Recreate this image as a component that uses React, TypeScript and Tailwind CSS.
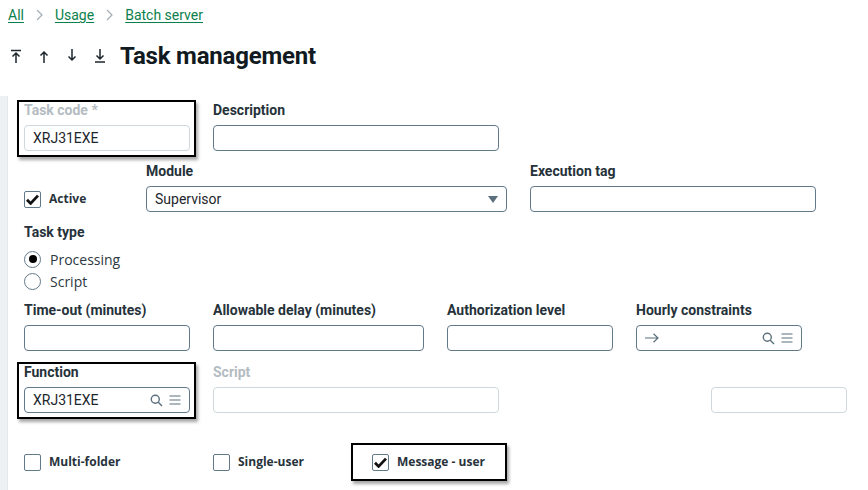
import { ReactNode } from 'react';

const labelCls = 'block h-[18px] text-[14px] leading-[18px] font-bold text-[#26323a]';

function SearchIcon() {
  return (
    <svg width="13" height="13" viewBox="0 0 13 13" fill="none" stroke="#5b6f7c" strokeWidth="1.4">
      <circle cx="5.3" cy="5.3" r="4" />
      <path d="M8.3 8.3 12 12" />
    </svg>
  );
}

function MenuIcon() {
  return (
    <svg width="12" height="10" viewBox="0 0 12 10" fill="none" stroke="#5b6f7c" strokeWidth="1.2">
      <path d="M0.5 1h11M0.5 5h11M0.5 9h11" />
    </svg>
  );
}

function CheckMark() {
  return (
    <svg width="13" height="11" viewBox="0 0 13 11">
      <path d="M1 5.8 4.6 9.4 12 1.6" fill="none" stroke="#111" strokeWidth="2.8" />
    </svg>
  );
}

function Chevron() {
  return (
    <svg width="7" height="12" viewBox="0 0 7 12" fill="none" stroke="#a4adb3" strokeWidth="1.2" className="mx-[12px]">
      <path d="M1 1l5 5-5 5" />
    </svg>
  );
}

function Field({
  label,
  width,
  children,
  disabled,
}: {
  label: string;
  width: string;
  children?: ReactNode;
  disabled?: boolean;
}) {
  return (
    <div className={`flex flex-col ${width}`}>
      <span className={`${labelCls} ${disabled ? 'text-[#b4bcc2]' : ''}`}>{label}</span>
      <div
        className={`mt-[6px] h-[26px] rounded-[4px] border flex items-center px-[8px] text-[14px] text-[#1d262c] ${
          disabled ? 'border-[#cdd7dc] bg-white' : 'border-[#62798a] bg-white'
        }`}
      >
        {children}
      </div>
    </div>
  );
}

function Highlight({ children }: { children: ReactNode }) {
  return (
    <div className="relative">
      {children}
      <div className="pointer-events-none absolute left-[-7px] top-[-1px] right-[-6px] bottom-[-6px] border-2 border-black shadow-[2px_3px_3px_rgba(0,0,0,0.35)]" />
    </div>
  );
}

function Check({ label, checked }: { label: string; checked?: boolean }) {
  return (
    <div className="flex items-center gap-[8px] h-[18px]">
      <div className="w-[17px] h-[17px] rounded-[2px] border border-[#62798a] bg-white flex items-center justify-center">
        {checked && <CheckMark />}
      </div>
      <span className="text-[12px] font-bold text-[#28333c] font-['Open_Sans',sans-serif]">{label}</span>
    </div>
  );
}

function Radio({ label, checked }: { label: string; checked?: boolean }) {
  return (
    <div className="flex items-center gap-[9px] h-[22px]">
      <div className="w-[17px] h-[17px] rounded-full border border-[#62798a] bg-white flex items-center justify-center">
        {checked && <div className="w-[8px] h-[8px] rounded-full bg-black" />}
      </div>
      <span className="text-[14px] text-[#2d3942] font-['Open_Sans',sans-serif]">{label}</span>
    </div>
  );
}

function NavArrow({ dir, bar }: { dir: 'up' | 'down'; bar?: boolean }) {
  const up = dir === 'up';
  return (
    <svg width="12" height="14" viewBox="0 0 12 14" fill="none" stroke="#1d262c" strokeWidth="1.5">
      {up ? (
        <>
          {bar && <path d="M1 1.5h10" />}
          <path d={bar ? 'M6 4v10M2.5 7.5 6 4l3.5 3.5' : 'M6 3v11M2.5 6.5 6 3l3.5 3.5'} />
        </>
      ) : (
        <>
          {bar && <path d="M1 13h10" />}
          <path d={bar ? 'M6 0v10M2.5 6.5 6 10l3.5-3.5' : 'M6 0v11M2.5 7.5 6 11l3.5-3.5'} />
        </>
      )}
    </svg>
  );
}

export default function App() {
  return (
    <div className="w-[868px] h-[490px] overflow-hidden bg-white font-['Roboto',sans-serif]">
      {/* Breadcrumb */}
      <div className="pt-[6px] pl-[8px] flex items-center h-[24px] text-[14px] leading-[18px] text-[#0b7f4d]">
        <span className="underline underline-offset-2">All</span>
        <Chevron />
        <span className="underline underline-offset-2">Usage</span>
        <Chevron />
        <span className="underline underline-offset-2">Batch server</span>
      </div>

      {/* Title bar */}
      <div className="mt-[16px] h-[32px] flex items-center pl-[10px]">
        <div className="flex items-center gap-[16px]">
          <NavArrow dir="up" bar />
          <NavArrow dir="up" />
          <NavArrow dir="down" />
          <NavArrow dir="down" bar />
        </div>
        <h1 className="ml-[14px] text-[24px] font-bold text-[#111a20] tracking-[-0.2px]">Task management</h1>
      </div>

      <div className="mt-[24px] flex h-[400px]">
        <div className="w-[8px] bg-[#eef1f3] border-r border-[#e3e8eb]" />
        <div className="pl-[16px] pt-[5px] flex flex-col">
          {/* Task code / description */}
          <div className="flex gap-[23px]">
            <Highlight>
              <Field label="Task code *" width="w-[166px]" disabled>
                XRJ31EXE
              </Field>
            </Highlight>
            <Field label="Description" width="w-[286px]" />
          </div>

          {/* Active / module / execution tag */}
          <div className="mt-[11px] flex items-end">
            <div className="w-[122px] h-[26px] flex items-center">
              <Check label="Active" checked />
            </div>
            <Field label="Module" width="w-[361px]">
              <span className="flex-1">Supervisor</span>
              <svg width="10" height="7" viewBox="0 0 10 7">
                <path d="M0 0h10L5 7z" fill="#5b6f7c" />
              </svg>
            </Field>
            <div className="ml-[23px]">
              <Field label="Execution tag" width="w-[286px]" />
            </div>
          </div>

          {/* Task type */}
          <div className="mt-[11px]">
            <span className={labelCls}>Task type</span>
            <div className="mt-[7px] flex flex-col">
              <Radio label="Processing" checked />
              <Radio label="Script" />
            </div>
          </div>

          {/* Timing */}
          <div className="mt-[9px] flex gap-[23px]">
            <Field label="Time-out (minutes)" width="w-[166px]" />
            <Field label="Allowable delay (minutes)" width="w-[211px]" />
            <Field label="Authorization level" width="w-[166px]" />
            <Field label="Hourly constraints" width="w-[166px]">
              <svg width="14" height="10" viewBox="0 0 14 10" fill="none" stroke="#5b6f7c" strokeWidth="1.2">
                <path d="M0 5h13M8.5 0.8 13 5l-4.5 4.2" />
              </svg>
              <span className="flex-1" />
              <div className="flex items-center gap-[6px]">
                <SearchIcon />
                <MenuIcon />
              </div>
            </Field>
          </div>

          {/* Function / script */}
          <div className="mt-[12px] flex">
            <Highlight>
              <Field label="Function" width="w-[166px]">
                <span className="flex-1">XRJ31EXE</span>
                <div className="flex items-center gap-[6px]">
                  <SearchIcon />
                  <MenuIcon />
                </div>
              </Field>
            </Highlight>
            <div className="ml-[23px]">
              <Field label="Script" width="w-[286px]" disabled />
            </div>
            <div className="ml-[212px] flex flex-col">
              <span className="h-[18px]" />
              <div className="mt-[6px] h-[26px] w-[136px] rounded-[4px] border border-[#cdd7dc]" />
            </div>
          </div>

          {/* Flags */}
          <div className="mt-[40px] flex items-center">
            <div className="w-[189px]">
              <Check label="Multi-folder" />
            </div>
            <div className="w-[159px]">
              <Check label="Single-user" />
            </div>
            <div className="relative">
              <Check label="Message - user" checked />
              <div className="pointer-events-none absolute left-[-21px] top-[-10px] right-[-22px] bottom-[-10px] border-2 border-black shadow-[2px_3px_3px_rgba(0,0,0,0.35)]" />
            </div>
          </div>
        </div>
      </div>
    </div>
  );
}
